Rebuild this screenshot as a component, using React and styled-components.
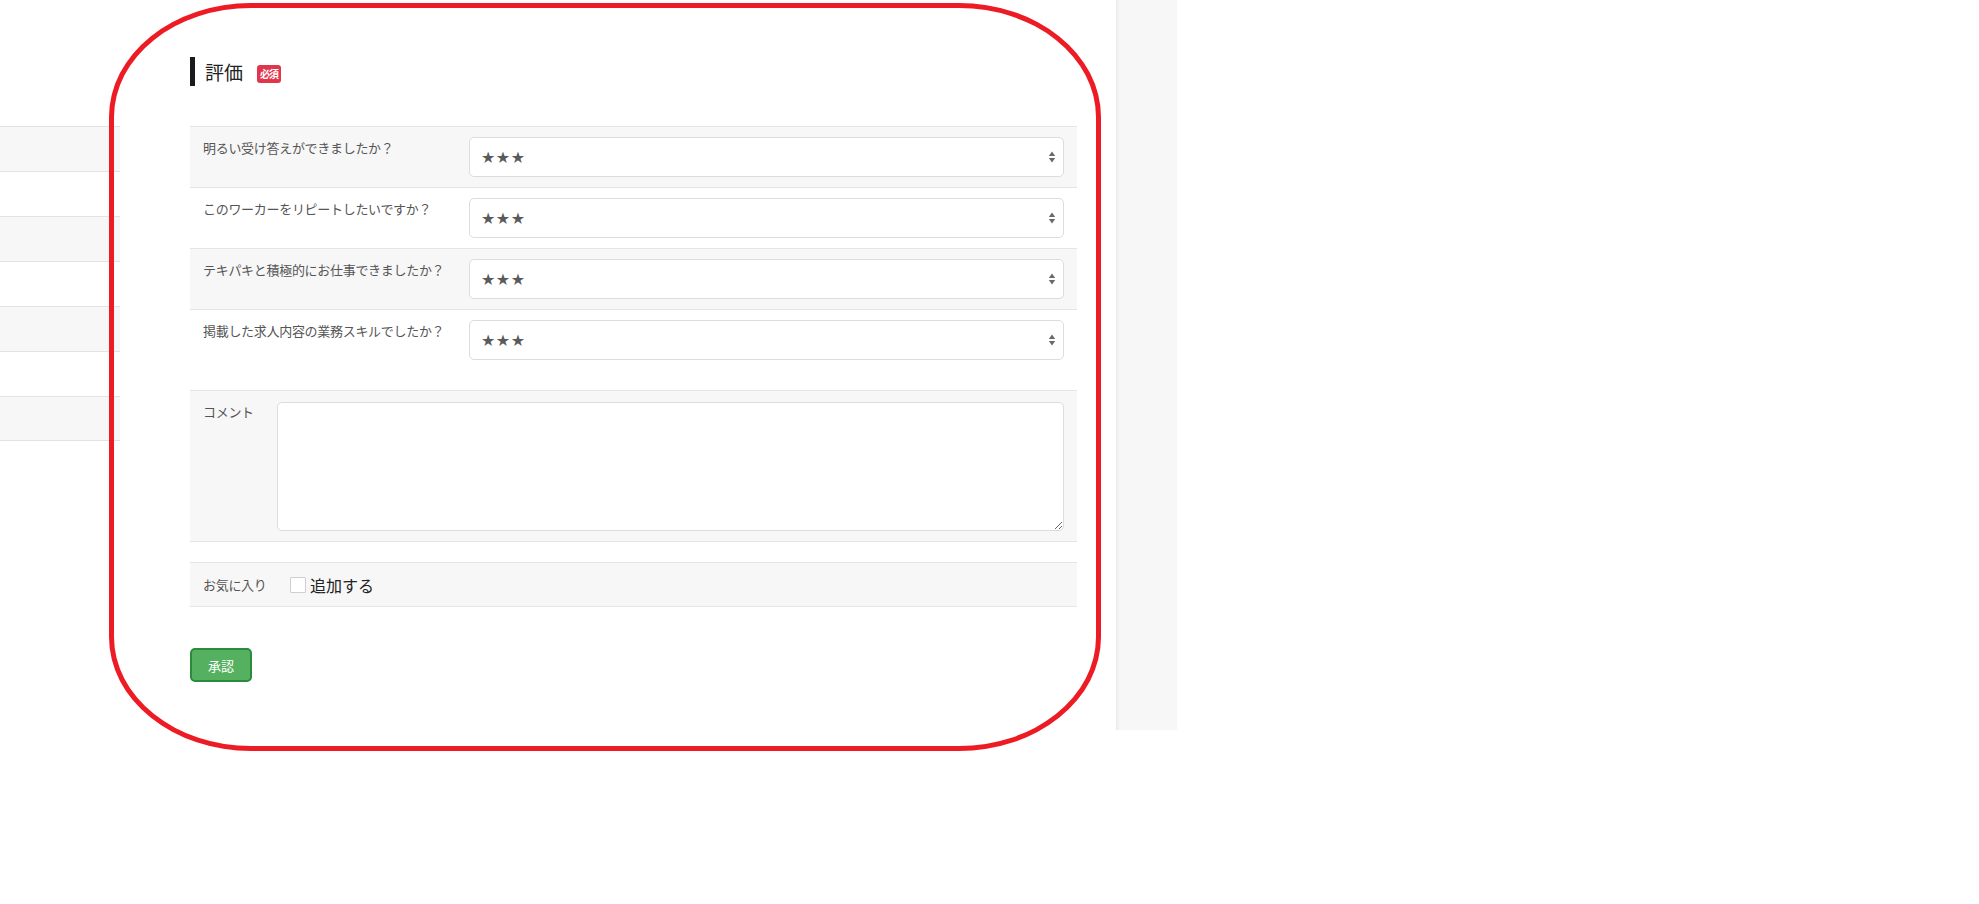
import React from "react";
import styled, { createGlobalStyle } from "styled-components";

const GlobalStyle = createGlobalStyle`
  html, body {
    margin: 0;
    padding: 0;
    background: #fff;
  }
  body {
    font-family: "Noto Sans CJK JP", "Noto Sans", "Liberation Sans", sans-serif;
    color: #333;
  }
`;

const Page = styled.div`
  position: relative;
  display: flex;
  align-items: flex-start;
  width: 1979px;
  min-height: 904px;
`;

const SideTable = styled.div`
  width: 120px;
  margin-top: 126px;
  display: flex;
  flex-direction: column;
`;

const SideRow = styled.div`
  height: 45px;
  box-sizing: border-box;
  border-top: 1px solid #e3e3e3;
  background: ${(p) => (p.striped ? "#f7f7f7" : "#fff")};
  &:last-child {
    border-bottom: 1px solid #e3e3e3;
  }
`;

const Main = styled.main`
  width: 887px;
  margin-left: 70px;
  padding-top: 57px;
  display: flex;
  flex-direction: column;
`;

const Heading = styled.h2`
  display: flex;
  align-items: center;
  margin: 0;
  height: 29px;
  padding-left: 10px;
  border-left: 5px solid #1a1a1a;
  font-size: 19px;
  font-weight: 400;
  color: #222;
  line-height: 1;
`;

const Badge = styled.span`
  display: inline-flex;
  align-items: center;
  justify-content: center;
  width: 24px;
  height: 18px;
  margin-left: 14px;
  margin-top: 4px;
  border-radius: 3px;
  background: #e0354b;
  color: #fff;
  font-size: 10px;
  font-weight: 700;
  letter-spacing: -1px;
`;

const Table = styled.div`
  display: flex;
  flex-direction: column;
  margin-top: ${(p) => p.gap || 0}px;
`;

const Row = styled.div`
  display: grid;
  grid-template-columns: ${(p) => p.labelWidth}px 1fr;
  box-sizing: border-box;
  min-height: ${(p) => p.height || 0}px;
  border-top: 1px solid #e5e5e5;
  border-bottom: ${(p) => (p.closed ? "1px solid #e5e5e5" : "none")};
  background: ${(p) => (p.striped ? "#f7f7f7" : "#fff")};
`;

const Label = styled.div`
  padding: ${(p) => p.pad || "12px 0 12px 13px"};
  font-size: 13px;
  line-height: 18px;
  letter-spacing: -0.3px;
  white-space: nowrap;
  color: #555;
`;

const Field = styled.div`
  padding: ${(p) => p.pad || "10px 13px 10px 10px"};
  display: flex;
  align-items: center;
`;

const SelectWrap = styled.div`
  position: relative;
  width: 100%;
`;

const Select = styled.select`
  appearance: none;
  -webkit-appearance: none;
  width: 100%;
  height: 40px;
  box-sizing: border-box;
  padding: 0 30px 0 11px;
  border: 1px solid #dcdcdc;
  border-radius: 5px;
  background: #fff;
  color: #5a5a5a;
  font-family: "DejaVu Sans", "Noto Sans", sans-serif;
  font-size: 16px;
  letter-spacing: 0.5px;
  outline: none;
`;

const Arrows = styled.svg`
  position: absolute;
  right: 8px;
  top: 50%;
  margin-top: -6px;
  pointer-events: none;
`;

const TextArea = styled.textarea`
  width: 100%;
  height: 129px;
  box-sizing: border-box;
  border: 1px solid #dcdcdc;
  border-radius: 5px;
  background: #fff;
  resize: vertical;
  outline: none;
  font-family: inherit;
`;

const CheckLabel = styled.label`
  display: flex;
  align-items: center;
  gap: 4px;
  font-size: 16px;
  color: #222;
  line-height: 1;
`;

const Check = styled.input`
  appearance: none;
  -webkit-appearance: none;
  margin: 0;
  width: 16px;
  height: 16px;
  box-sizing: border-box;
  border: 1px solid #cfcfcf;
  border-radius: 1px;
  background: #fff;
`;

const SubmitButton = styled.button`
  align-self: flex-start;
  margin-top: 41px;
  width: 62px;
  height: 34px;
  box-sizing: border-box;
  border: 2px solid #2b8b3d;
  border-radius: 5px;
  background: #55b05f;
  color: #fff;
  font-family: inherit;
  font-size: 13px;
  cursor: pointer;
`;

const Sidebar = styled.aside`
  width: 61px;
  height: 730px;
  margin-left: 39px;
  background: #f7f7f7;
  box-shadow: inset 4px 0 3px -2px #ececec;
`;

const Highlight = styled.div`
  position: absolute;
  left: 109px;
  top: 3px;
  width: 992px;
  height: 748px;
  box-sizing: border-box;
  border: 5px solid #ed1c24;
  border-radius: 142px / 114px;
  pointer-events: none;
`;

const questions = [
  "明るい受け答えができましたか？",
  "このワーカーをリピートしたいですか？",
  "テキパキと積極的にお仕事できましたか？",
  "掲載した求人内容の業務スキルでしたか？",
];

const SortArrows = () => (
  <Arrows width="8" height="12" viewBox="0 0 8 12">
    <path d="M4 0.5 L7.2 5 H0.8 Z" fill="#6a6a6a" />
    <path d="M4 11.5 L7.2 7 H0.8 Z" fill="#6a6a6a" />
  </Arrows>
);

const App = () => {
  return (
    <>
      <GlobalStyle />
      <Page>
        <SideTable>
          {[0, 1, 2, 3, 4, 5, 6].map((i) => (
            <SideRow key={i} striped={i % 2 === 0} />
          ))}
        </SideTable>

        <Main>
          <Heading>
            評価<Badge>必須</Badge>
          </Heading>

          <Table gap={40}>
            {questions.map((q, i) => (
              <Row key={q} labelWidth={269} height={61} striped={i % 2 === 0}>
                <Label>{q}</Label>
                <Field>
                  <SelectWrap>
                    <Select defaultValue="3">
                      <option value="1">★</option>
                      <option value="2">★★</option>
                      <option value="3">★★★</option>
                      <option value="4">★★★★</option>
                      <option value="5">★★★★★</option>
                    </Select>
                    <SortArrows />
                  </SelectWrap>
                </Field>
              </Row>
            ))}
          </Table>

          <Table gap={20}>
            <Row labelWidth={77} striped closed>
              <Label>コメント</Label>
              <Field pad="11px 13px 10px 10px">
                <TextArea />
              </Field>
            </Row>
          </Table>

          <Table gap={20}>
            <Row labelWidth={100} height={45} striped closed>
              <Label pad="13px 0 12px 13px">お気に入り</Label>
              <Field pad="0">
                <CheckLabel>
                  <Check type="checkbox" />
                  追加する
                </CheckLabel>
              </Field>
            </Row>
          </Table>

          <SubmitButton type="button">承認</SubmitButton>
        </Main>

        <Sidebar />
        <Highlight />
      </Page>
    </>
  );
};

export default App;
